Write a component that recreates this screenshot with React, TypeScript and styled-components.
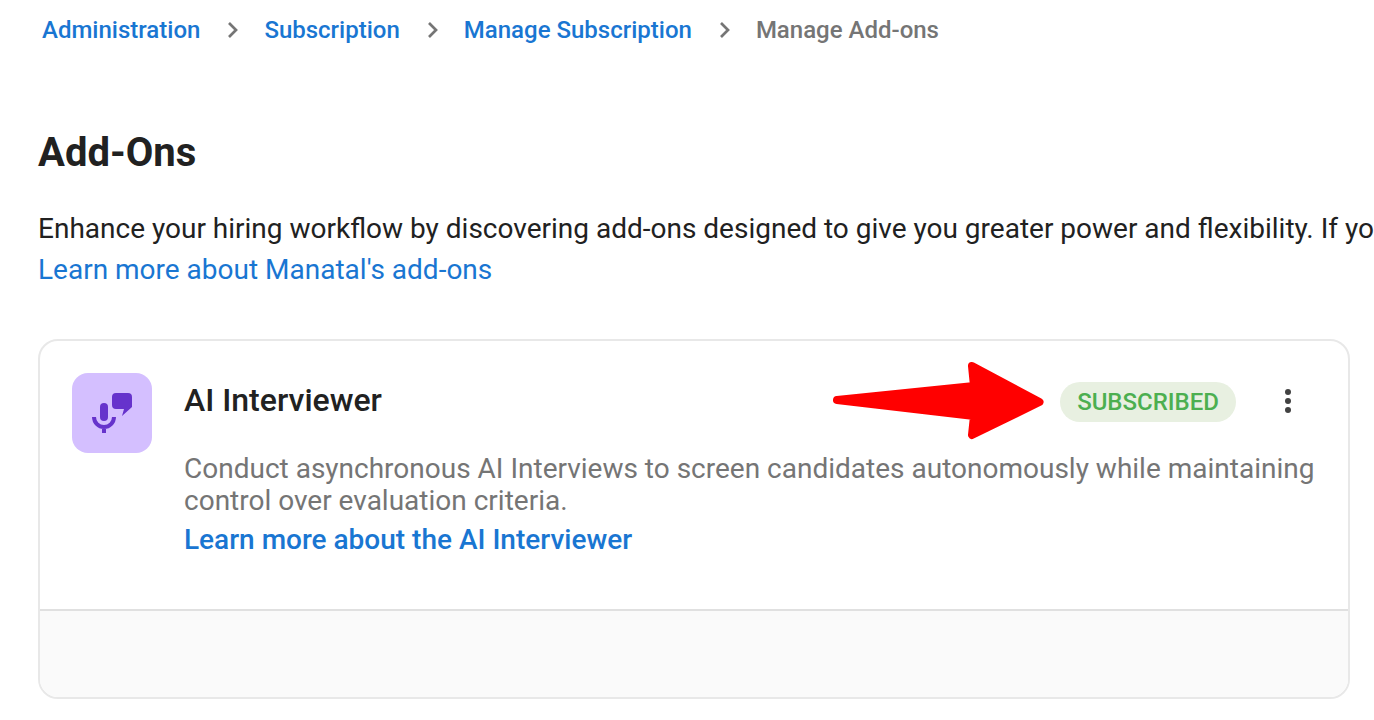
import React from "react";
import styled, { createGlobalStyle } from "styled-components";

const GlobalStyle = createGlobalStyle`
  *, *::before, *::after { box-sizing: border-box; }
  body {
    margin: 0;
    background: #ffffff;
    color: #212121;
    font-family: Roboto, "Liberation Sans", sans-serif;
    overflow: hidden;
  }
`;

const Page = styled.main`
  padding: 12px 24px 20px 38px;
`;

const Breadcrumbs = styled.ol`
  display: flex;
  align-items: center;
  margin: 0;
  padding: 0 4px;
  list-style: none;
  font-size: 24px;
  line-height: 36px;
  font-weight: 500;
`;

const Crumb = styled.li`
  display: flex;
  align-items: center;
  white-space: nowrap;
  color: #757575;
`;

const CrumbLink = styled.a`
  color: #1976d2;
  text-decoration: none;
`;

const Separator = styled.svg`
  width: 32px;
  height: 32px;
  margin: 0 16px;
  fill: none;
  stroke: #757575;
  stroke-width: 2.7;
`;

const Title = styled.h1`
  margin: 80px 0 0;
  font-size: 40px;
  line-height: 50px;
  font-weight: 700;
`;

const Intro = styled.p`
  margin: 30px 0 0;
  font-size: 28px;
  line-height: 41px;
  white-space: nowrap;
`;

const IntroLink = styled.a`
  display: block;
  color: #1976d2;
  text-decoration: none;
`;

const Card = styled.section`
  margin-top: 49px;
  border: 2px solid #e8e8e8;
  border-radius: 20px;
  overflow: hidden;
`;

const CardBody = styled.div`
  display: flex;
  align-items: flex-start;
  gap: 32px;
  padding: 32px 32px 50px;
`;

const AddOnIcon = styled.svg`
  flex: none;
  width: 80px;
  height: 80px;
  border-radius: 16px;
  background: #d4bfff;
`;

const Details = styled.div`
  flex: 1;
  min-width: 0;
`;

const Header = styled.div`
  display: flex;
  align-items: center;
  height: 58px;
`;

const AddOnName = styled.h2`
  flex: 1;
  align-self: flex-start;
  margin: 0;
  font-size: 32px;
  line-height: 54px;
  font-weight: 500;
`;

const Status = styled.div`
  position: relative;
`;

const Badge = styled.span`
  display: block;
  padding: 0 17px;
  border-radius: 20px;
  background: #e8f0e1;
  color: #4caf50;
  font-size: 24px;
  line-height: 40px;
  font-weight: 500;
`;

const Pointer = styled.svg`
  position: absolute;
  right: 100%;
  top: -24px;
  width: 232px;
  height: 88px;
  fill: #ff0000;
  stroke: #ff0000;
  stroke-width: 8;
  stroke-linejoin: round;
`;

const MenuButton = styled.button`
  display: flex;
  margin: 0 4px 0 28px;
  padding: 8px;
  border: 0;
  background: none;
  cursor: pointer;

  svg {
    width: 32px;
    height: 32px;
    fill: #424242;
  }
`;

const Description = styled.p`
  margin: 22px 0 0;
  color: #757575;
  font-size: 28px;
  line-height: 32px;
`;

const DetailsLink = styled.a`
  display: block;
  margin-top: 4px;
  color: #1976d2;
  font-size: 28px;
  line-height: 38px;
  font-weight: 500;
  text-decoration: none;
`;

const CardFooter = styled.footer`
  min-height: 88px;
  border-top: 2px solid #e0e0e0;
  background: #fafafa;
`;

const trail = ["Administration", "Subscription", "Manage Subscription"];

export default function App() {
  return (
    <>
      <GlobalStyle />
      <Page>
        <nav aria-label="Breadcrumb">
          <Breadcrumbs>
            {trail.map((name) => (
              <Crumb key={name}>
                <CrumbLink href="#">{name}</CrumbLink>
                <Separator viewBox="0 0 32 32" aria-hidden="true">
                  <path d="M13 9l7 7-7 7" />
                </Separator>
              </Crumb>
            ))}
            <Crumb aria-current="page">Manage Add-ons</Crumb>
          </Breadcrumbs>
        </nav>

        <Title>Add-Ons</Title>
        <Intro>
          Enhance your hiring workflow by discovering add-ons designed to give you greater power and flexibility. If you
          <IntroLink href="#">Learn more about Manatal's add-ons</IntroLink>
        </Intro>

        <Card>
          <CardBody>
            <AddOnIcon viewBox="0 0 80 80" aria-hidden="true">
              <rect x="28" y="30" width="8" height="18" rx="4" fill="#6633cc" />
              <path d="M22 44a10 10 0 0 0 20 0M32 54v6" fill="none" stroke="#6633cc" strokeWidth="4" />
              <path
                d="M44 20h12a4 4 0 0 1 4 4v10l-10 9 2-7h-8a4 4 0 0 1-4-4v-8a4 4 0 0 1 4-4z"
                fill="#6633cc"
              />
            </AddOnIcon>
            <Details>
              <Header>
                <AddOnName>AI Interviewer</AddOnName>
                <Status>
                  <Pointer viewBox="0 0 232 88" aria-hidden="true">
                    <path d="M9 42L146 28L144 8L211.500 44L144 77L146 58Z" />
                  </Pointer>
                  <Badge>SUBSCRIBED</Badge>
                </Status>
                <MenuButton type="button" aria-label="More options">
                  <svg viewBox="0 0 32 32" aria-hidden="true">
                    <circle cx="16" cy="6" r="3" />
                    <circle cx="16" cy="15" r="3" />
                    <circle cx="16" cy="24" r="3" />
                  </svg>
                </MenuButton>
              </Header>
              <Description>
                Conduct asynchronous AI Interviews to screen candidates autonomously while maintaining control over
                evaluation criteria.
              </Description>
              <DetailsLink href="#">Learn more about the AI Interviewer</DetailsLink>
            </Details>
          </CardBody>
          <CardFooter />
        </Card>
      </Page>
    </>
  );
}
